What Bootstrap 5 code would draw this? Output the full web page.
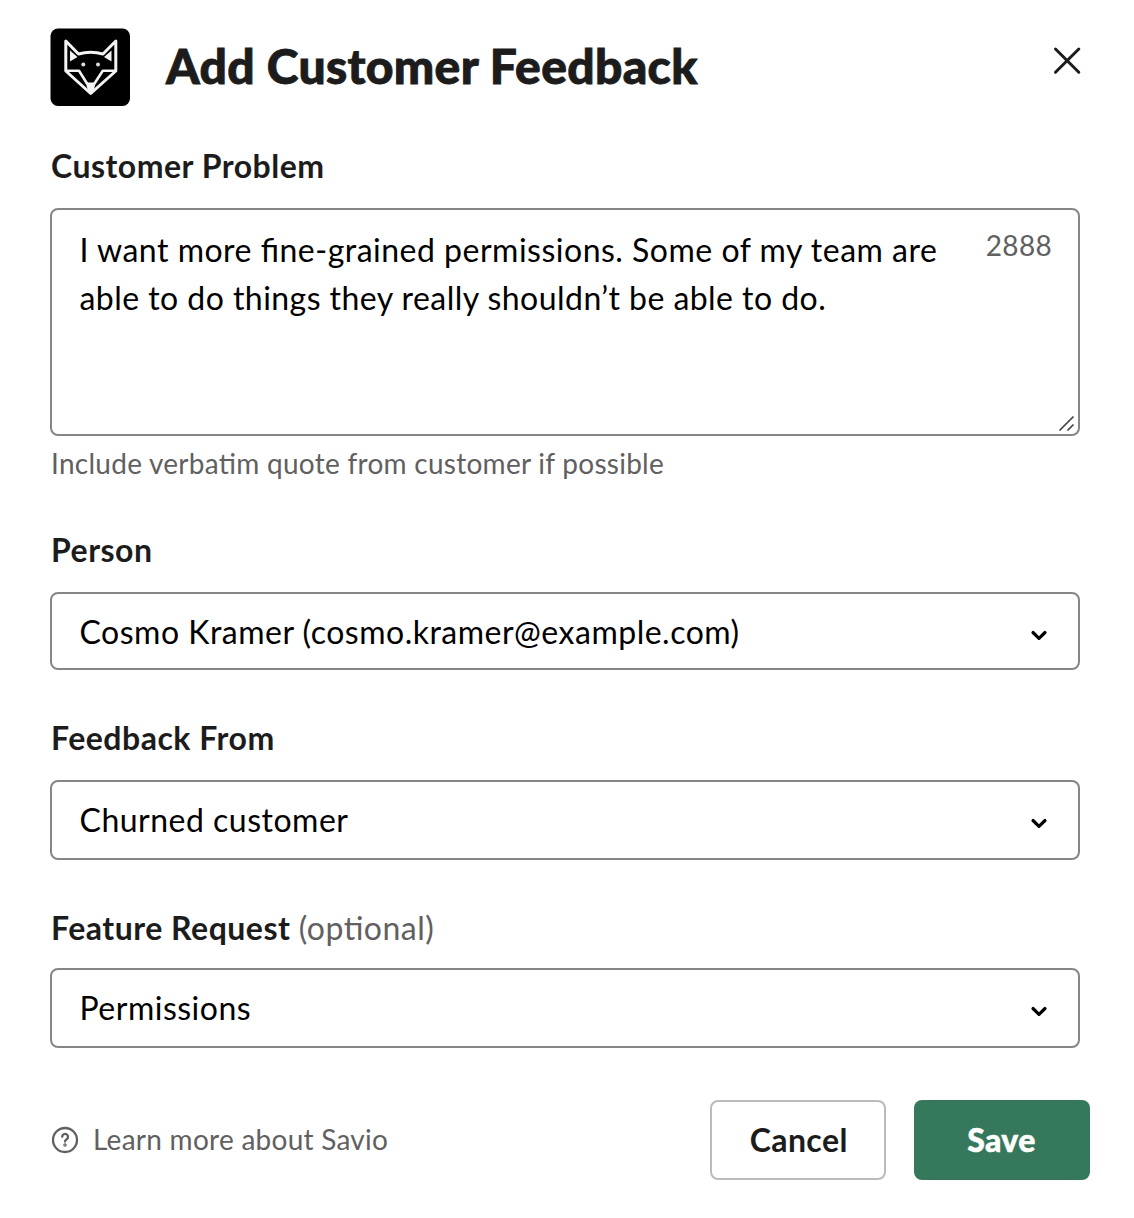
<!DOCTYPE html>
<html lang="en">
<head>
<meta charset="utf-8">
<meta name="viewport" content="width=device-width, initial-scale=1">
<title>Add Customer Feedback</title>
<link rel="stylesheet" href="https://cdn.jsdelivr.net/npm/bootstrap@5.3.0/dist/css/bootstrap.min.css">
<style>
body{font-family:Lato,"Liberation Sans",sans-serif;color:#1d1c1d;background:#fff;font-size:32px;letter-spacing:.5px;font-feature-settings:"liga" 1}
.sheet{height:1218px;padding:28px 44px 0 50px}
.topbar{height:78px}
.sheet-title{font-size:48px;font-weight:900;line-height:76px;margin-left:36px;white-space:nowrap;letter-spacing:.33px;-webkit-text-stroke:.9px #1d1c1d}
.closer{margin:18px 8px 0 0;line-height:0}
.field{margin-right:10px}
.field-label{font-size:32px;font-weight:700;line-height:40px;display:block;padding-left:1px;margin:0}
.optional{font-weight:400;color:#616061}
.box{border:2px solid #868686;border-radius:8px;color:#000;font-size:32px;line-height:48px;padding:0 27px 0 27.5px;background:#fff}
.area{height:228px;padding-top:16px;margin-top:22px}
.tighter{letter-spacing:.45px}
.pick{height:78px;padding-top:2px;margin-top:22px}
.pick.tall{height:80px;padding-top:0}
.pick.near{margin-top:20px}
.counter{font-size:28px;line-height:38px;color:#616061;letter-spacing:.3px;margin-right:-1px}
.hint{font-size:28px;line-height:36px;color:#616061;padding-left:1px;letter-spacing:.27px;margin-top:9px}
.grip{position:absolute;right:3px;bottom:2px}
.chev{margin:6px 2px 0 0}
.pick:not(.tall) .chev{margin-top:5px}
.first{margin-top:40px}
.next{margin-top:48px}
.after-hint{margin-top:49px}
.foot{margin-top:52px}
.help{font-size:28px;color:#616061;letter-spacing:.26px;margin:-2px 0 0 13px}
.act{width:176px;height:80px;border-radius:8px;font-size:32px;font-weight:700;padding:0;letter-spacing:.4px}
.act-cancel,.act-cancel:hover{border:2px solid #bbb;color:#1d1c1d;background:#fff;padding-left:1.5px}
.act-save,.act-save:hover{background:#35785b;color:#fff;font-weight:900;border:0;margin-left:28px;padding-right:1px;-webkit-text-stroke:.5px #fff}
</style>
</head>
<body>
<main class="sheet d-flex flex-column">
  <header class="topbar d-flex align-items-start">
    <svg width="80" height="78" viewBox="0 0 80 78"><rect x=".5" y=".5" width="79.500" height="77.500" rx="7.500" fill="#000"/>
      <g fill="none" stroke="#f4f4f4" stroke-width="3" stroke-linejoin="round"><path d="M15.800 13 28.500 26Q40.700 22.500 53 26L65.800 13V43L40.700 65.500 15.800 43Z"/><path d="M16 42.800H29L37 55.500M65.500 42.800H52.800L44.500 55.500" stroke-width="2.600"/></g>
      <path d="M20 22.500v11l7.500-4.500ZM61.500 22.500v11l-7.500-4.500ZM35.500 54.500h10.500l-3.500 11h-3.500Z" fill="#f4f4f4"/><circle cx="33.300" cy="36.500" r="2" fill="#ddd"/><circle cx="48" cy="36.500" r="2" fill="#ddd"/></svg>
    <h1 class="sheet-title mb-0">Add Customer Feedback</h1>
    <div class="closer ms-auto"><svg width="30" height="30" viewBox="0 0 30 30" stroke="#1d1c1d" stroke-width="3" stroke-linecap="round"><path d="M3.500 3 26.800 26.300M26.800 3 3.500 26.300"/></svg></div>
  </header>

  <section class="field first">
    <h2 class="field-label">Customer Problem</h2>
    <div class="box area position-relative d-flex justify-content-between">
      <div class="text-nowrap">I want more fine-grained permissions. Some of my team are<br><span class="tighter">able to do things they really shouldn’t be able to do.</span></div>
      <div class="counter">2888</div>
      <svg class="grip" width="17" height="17" viewBox="0 0 17 17" stroke="#444" stroke-width="1.700"><path d="M1.500 15.500 15.500 1.500M9.500 15.500 15.500 9.500"/></svg>
    </div>
    <div class="hint">Include verbatim quote from customer if possible</div>
  </section>

  <section class="field after-hint">
    <h2 class="field-label">Person</h2>
    <div class="box pick d-flex align-items-center justify-content-between"><span>Cosmo Kramer (cosmo.kramer@example.com)</span>
      <svg class="chev" width="20" height="14" viewBox="0 0 20 14" fill="none" stroke="#000" stroke-width="3.200" stroke-linecap="round" stroke-linejoin="round"><path d="M4 4.500 10 10.300 16 4.500"/></svg></div>
  </section>

  <section class="field next">
    <h2 class="field-label">Feedback From</h2>
    <div class="box pick tall d-flex align-items-center justify-content-between"><span>Churned customer</span>
      <svg class="chev" width="20" height="14" viewBox="0 0 20 14" fill="none" stroke="#000" stroke-width="3.200" stroke-linecap="round" stroke-linejoin="round"><path d="M4 4.500 10 10.300 16 4.500"/></svg></div>
  </section>

  <section class="field next">
    <h2 class="field-label">Feature Request <span class="optional">(optional)</span></h2>
    <div class="box pick tall near d-flex align-items-center justify-content-between"><span>Permissions</span>
      <svg class="chev" width="20" height="14" viewBox="0 0 20 14" fill="none" stroke="#000" stroke-width="3.200" stroke-linecap="round" stroke-linejoin="round"><path d="M4 4.500 10 10.300 16 4.500"/></svg></div>
  </section>

  <footer class="foot d-flex align-items-center">
    <svg width="30" height="30" viewBox="0 0 30 30" fill="none" stroke="#616061" stroke-width="2.300" stroke-linecap="round"><circle cx="15" cy="15" r="12"/><path d="M12.200 11.800a2.900 2.900 0 1 1 4.500 2.500Q15 15.300 15 16.500"/><circle cx="15" cy="20" r=".6"/></svg>
    <span class="help">Learn more about Savio</span>
    <button type="button" class="btn act act-cancel ms-auto">Cancel</button>
    <button type="button" class="btn act act-save">Save</button>
  </footer>
</main>
<script src="https://cdn.jsdelivr.net/npm/bootstrap@5.3.0/dist/js/bootstrap.bundle.min.js"></script>
</body>
</html>
